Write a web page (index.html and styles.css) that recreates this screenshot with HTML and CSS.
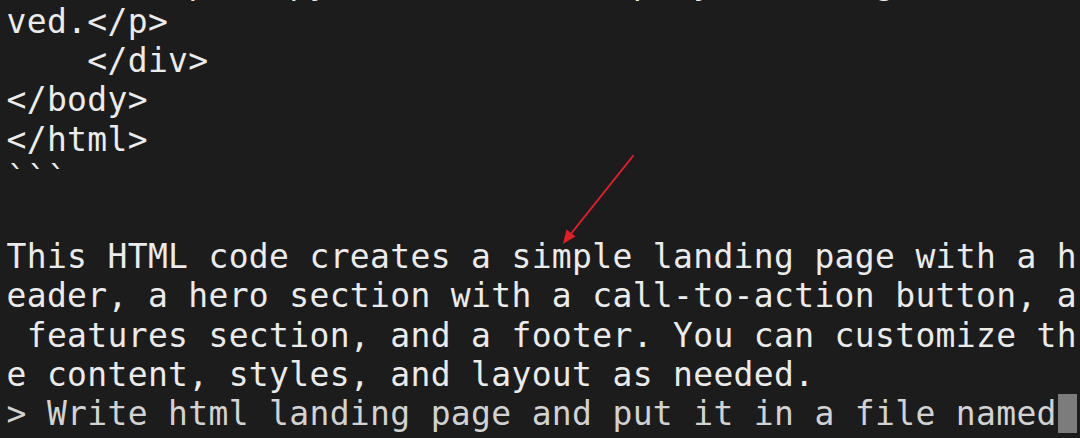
FILE: index.html
```html
<!DOCTYPE html>
<html lang="en">
<head>
<meta charset="utf-8">
<title>Terminal</title>
<link rel="stylesheet" href="styles.css">
</head>
<body>
<main class="terminal">
  <div class="line">        &lt;p&gt;&amp;copy; 2023 Your Company. All rights reser</div>
  <div class="line">ved.&lt;/p&gt;</div>
  <div class="line">    &lt;/div&gt;</div>
  <div class="line">&lt;/body&gt;</div>
  <div class="line">&lt;/html&gt;</div>
  <div class="line">```</div>
  <div class="line"> </div>
  <div class="line">This HTML code creates a simple landing page with a h</div>
  <div class="line">eader, a hero section with a call-to-action button, a</div>
  <div class="line"> features section, and a footer. You can customize th</div>
  <div class="line">e content, styles, and layout as needed.</div>
  <div class="line prompt">&gt; Write html landing page and put it in a file named<span class="cursor"> </span></div>
</main>
<svg class="arrow" width="1080" height="438" viewBox="0 0 1080 438" aria-hidden="true">
  <line x1="633" y1="156" x2="570" y2="235" stroke="#e31f26" stroke-width="2" stroke-linecap="round"/>
  <polygon points="563,244 566.5,229.5 575.5,236.5" fill="#e31f26"/>
</svg>
</body>
</html>
```
FILE: styles.css
```css
html, body {
  margin: 0;
  padding: 0;
  background: #1c1c1c;
  overflow: hidden;
}

body {
  width: 1080px;
  height: 438px;
  position: relative;
}

.terminal {
  margin-top: -37.2px;
  padding-left: 6.5px;
  font-family: "DejaVu Sans Mono", "Liberation Mono", monospace;
  font-size: 33px;
  letter-spacing: 0.33px;
  line-height: 39.2px;
  color: #ebebeb;
}

.line {
  white-space: pre;
  height: 39.2px;
}

.prompt {
  color: #d2d2d2;
}

.cursor {
  display: inline-block;
  width: 19px;
  height: 39px;
  vertical-align: top;
  margin-left: 1px;
  background: #7c7c7c;
}

.arrow {
  position: absolute;
  left: 0;
  top: 0;
  pointer-events: none;
}
```
